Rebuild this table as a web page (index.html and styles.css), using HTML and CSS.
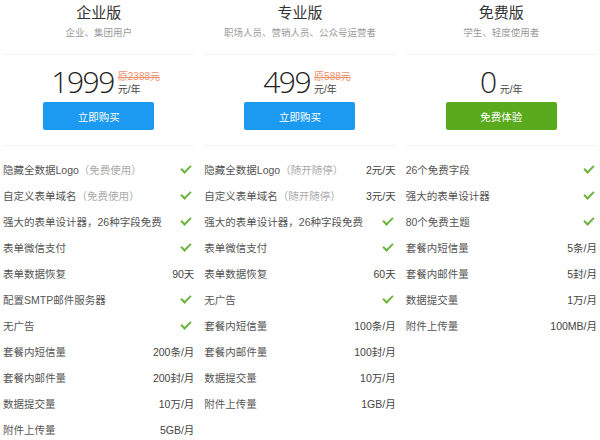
FILE: index.html
```html
<!DOCTYPE html>
<html>
<head>
  <title>版本价格</title>
  <link rel="stylesheet" href="styles.css">
</head>
<body>

<div class="plans">

  <!-- 企业版 -->
  <div class="plan">
    <div class="plan-head">
      <h2>企业版</h2>
      <p class="who">企业、集团用户</p>
    </div>
    <div class="price-box">
      <div class="price has-old">
        <span class="num">1999</span>
        <span class="unit">
          <del>原2388元</del>
          <span>元/年</span>
        </span>
      </div>
      <button class="btn">立即购买</button>
    </div>
    <ul class="features">
      <li><span>隐藏全数据Logo<em>（免费使用）</em></span><i class="ok"></i></li>
      <li><span>自定义表单域名<em>（免费使用）</em></span><i class="ok"></i></li>
      <li><span>强大的表单设计器，26种字段免费</span><i class="ok"></i></li>
      <li><span>表单微信支付</span><i class="ok"></i></li>
      <li><span>表单数据恢复</span><b>90天</b></li>
      <li><span>配置SMTP邮件服务器</span><i class="ok"></i></li>
      <li><span>无广告</span><i class="ok"></i></li>
      <li><span>套餐内短信量</span><b>200条/月</b></li>
      <li><span>套餐内邮件量</span><b>200封/月</b></li>
      <li><span>数据提交量</span><b>10万/月</b></li>
      <li><span>附件上传量</span><b>5GB/月</b></li>
    </ul>
  </div>

  <!-- 专业版 -->
  <div class="plan">
    <div class="plan-head">
      <h2>专业版</h2>
      <p class="who">职场人员、营销人员、公众号运营者</p>
    </div>
    <div class="price-box">
      <div class="price has-old">
        <span class="num">499</span>
        <span class="unit">
          <del>原588元</del>
          <span>元/年</span>
        </span>
      </div>
      <button class="btn">立即购买</button>
    </div>
    <ul class="features">
      <li><span>隐藏全数据Logo<em>（随开随停）</em></span><b>2元/天</b></li>
      <li><span>自定义表单域名<em>（随开随停）</em></span><b>3元/天</b></li>
      <li><span>强大的表单设计器，26种字段免费</span><i class="ok"></i></li>
      <li><span>表单微信支付</span><i class="ok"></i></li>
      <li><span>表单数据恢复</span><b>60天</b></li>
      <li><span>无广告</span><i class="ok"></i></li>
      <li><span>套餐内短信量</span><b>100条/月</b></li>
      <li><span>套餐内邮件量</span><b>100封/月</b></li>
      <li><span>数据提交量</span><b>10万/月</b></li>
      <li><span>附件上传量</span><b>1GB/月</b></li>
    </ul>
  </div>

  <!-- 免费版 -->
  <div class="plan">
    <div class="plan-head">
      <h2>免费版</h2>
      <p class="who">学生、轻度使用者</p>
    </div>
    <div class="price-box">
      <div class="price">
        <span class="num">0</span>
        <span class="unit">
          <span>元/年</span>
        </span>
      </div>
      <button class="btn free">免费体验</button>
    </div>
    <ul class="features">
      <li><span>26个免费字段</span><i class="ok"></i></li>
      <li><span>强大的表单设计器</span><i class="ok"></i></li>
      <li><span>80个免费主题</span><i class="ok"></i></li>
      <li><span>套餐内短信量</span><b>5条/月</b></li>
      <li><span>套餐内邮件量</span><b>5封/月</b></li>
      <li><span>数据提交量</span><b>1万/月</b></li>
      <li><span>附件上传量</span><b>100MB/月</b></li>
    </ul>
  </div>

</div>

</body>
</html>
```

FILE: styles.css
```css
body {
  margin: 0;
  padding: 0 3px;
  background: #fff;
  color: #555;
  font-family: "Liberation Sans", "Noto Sans CJK SC", sans-serif;
  font-size: 10.5px;
}

.plans {
  display: grid;
  grid-template-columns: repeat(3, 1fr);
  gap: 10px;
}

.plan-head {
  text-align: center;
  padding-top: 3px;
  border-bottom: 1px solid #f3f3f3;
  padding-bottom: 14px;
}

.plan-head h2 {
  margin: 0;
  font-size: 15px;
  line-height: 19px;
  font-weight: normal;
  color: #333;
}

.who {
  margin: 4px 0 0;
  font-size: 9.5px;
  line-height: 14px;
  color: #999;
}

.price-box {
  display: flex;
  flex-direction: column;
  align-items: center;
  padding: 12px 0 15px;
  border-bottom: 1px solid #f3f3f3;
}

.price {
  display: flex;
  align-items: flex-end;
  height: 30px;
}

.price.has-old {
  margin-left: 14px;
}

.num {
  font-family: "Open Sans", "Liberation Sans", sans-serif;
  font-weight: 300;
  font-size: 30px;
  line-height: 30px;
  letter-spacing: -1.5px;
  color: #222;
}

.unit {
  display: flex;
  flex-direction: column;
  margin-left: 4px;
  font-size: 10px;
  line-height: 13px;
  color: #444;
  padding-bottom: 1px;
}

.unit del {
  color: #f0906a;
}

.btn {
  margin-top: 5px;
  width: 111px;
  height: 28px;
  border: none;
  border-radius: 2px;
  background: #1c9af2;
  color: #fff;
  font-family: inherit;
  font-size: 10.5px;
  cursor: pointer;
}

.btn.free {
  background: #5aaa1e;
}

.features {
  list-style: none;
  margin: 0;
  padding: 10px 0 0;
}

.features li {
  display: flex;
  justify-content: space-between;
  align-items: center;
  height: 26px;
}

.features em {
  font-style: normal;
  color: #aaa;
}

.features b {
  font-weight: normal;
  color: #444;
}

.ok {
  width: 8px;
  height: 4px;
  margin-right: 3px;
  margin-bottom: 3px;
  border-left: 2px solid #6db33f;
  border-bottom: 2px solid #6db33f;
  transform: rotate(-45deg);
}
```
